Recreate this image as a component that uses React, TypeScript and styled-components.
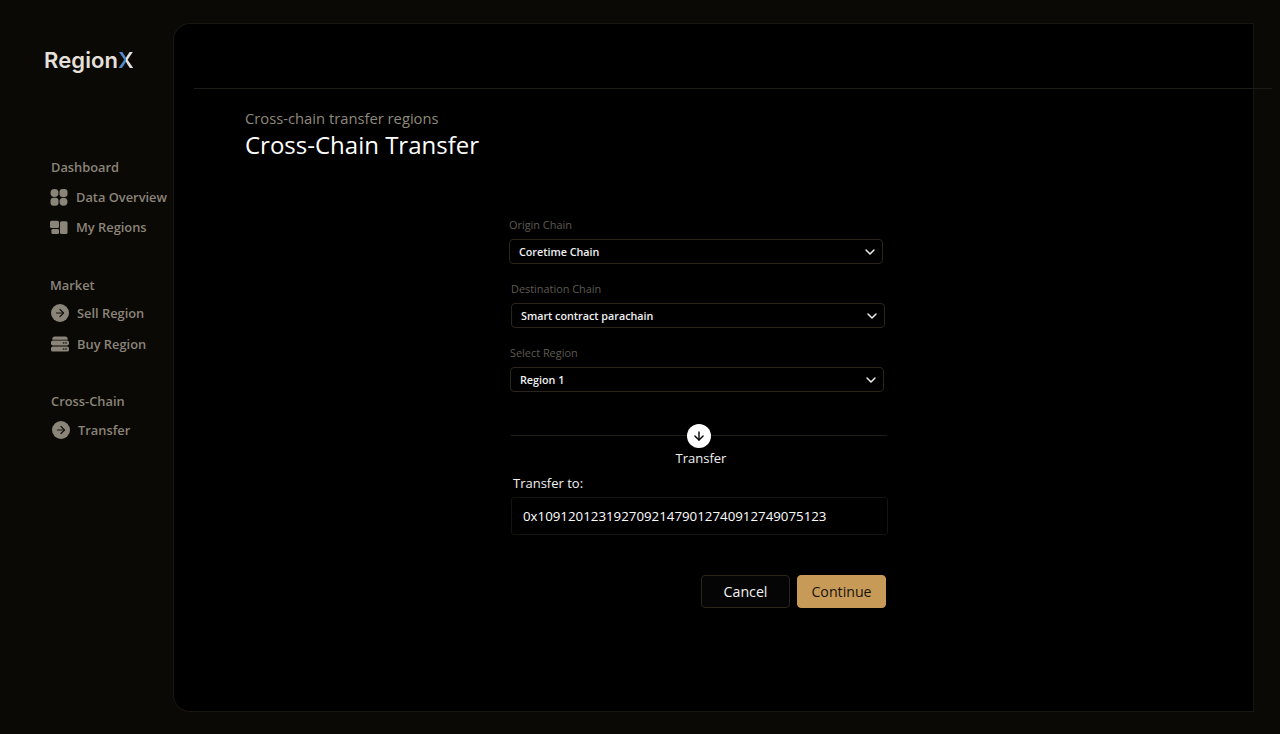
import React from 'react';
import styled, { createGlobalStyle } from 'styled-components';
import { ArrowDown, ArrowRight, ChevronDown } from 'lucide-react';

const GlobalStyle = createGlobalStyle`
  html, body {
    margin: 0;
    padding: 0;
    background: #0a0906;
    overflow: hidden;
  }
  * {
    box-sizing: border-box;
  }
`;

const Frame = styled.div`
  display: flex;
  width: 1280px;
  height: 734px;
  padding: 24px 27px 23px 0;
  background: #0a0906;
  font-family: 'Open Sans', 'Liberation Sans', sans-serif;
`;

const Sidebar = styled.aside`
  flex: 0 0 174px;
  display: flex;
  flex-direction: column;
`;

const Logo = styled.div`
  margin: 22px 0 0 44px;
  height: 28px;
  font-family: Inter, 'Liberation Sans', sans-serif;
  font-size: 22px;
  font-weight: 600;
  line-height: 28px;
  letter-spacing: 0.1px;
  color: #e6e0da;
`;

const LogoMark = styled.span`
  background: linear-gradient(90deg, #4f8bd0 52%, #e6e0da 52%);
  -webkit-background-clip: text;
  background-clip: text;
  color: transparent;
`;

const NavGroup = styled.nav<{ $top: number }>`
  margin-top: ${(p) => p.$top}px;
  display: flex;
  flex-direction: column;
`;

const NavTitle = styled.div<{ $x: number }>`
  margin-left: ${(p) => p.$x}px;
  height: 18px;
  font-size: 12.85px;
  font-weight: 600;
  line-height: 18px;
  color: #8a8479;
`;

const NavItem = styled.div<{ $x: number; $gap: number; $top: number }>`
  display: flex;
  align-items: center;
  gap: ${(p) => p.$gap}px;
  height: 18px;
  margin-top: ${(p) => p.$top}px;
  margin-left: ${(p) => p.$x}px;
  font-size: 12.85px;
  font-weight: 600;
  white-space: nowrap;
  color: #8a8479;
`;

const IconSlot = styled.div`
  flex: 0 0 auto;
  display: flex;
  align-items: center;
  justify-content: center;
  width: 18px;
  height: 18px;
`;

const ArrowBadge = styled.div`
  display: flex;
  align-items: center;
  justify-content: center;
  width: 18px;
  height: 18px;
  border-radius: 50%;
  background: #8a8479;
  color: #14120e;
`;

const Panel = styled.main`
  flex: 1;
  display: flex;
  flex-direction: column;
  background: #000;
  border-radius: 16px 0 0 16px;
  box-shadow: 0 0 0 1px #17160f;
`;

const TopRule = styled.div`
  flex: 0 0 auto;
  height: 1px;
  margin: 64px -19px 0 20px;
  background: #1e1c16;
`;

const PageHead = styled.header`
  margin: 20px 0 0 71px;
`;

const Eyebrow = styled.div`
  font-size: 14.75px;
  line-height: 18px;
  color: #8f897d;
`;

const PageTitle = styled.h1`
  margin: 1px 0 0;
  font-size: 24px;
  font-weight: 400;
  line-height: 34px;
  color: #fff;
`;

const Form = styled.section`
  width: 384px;
  margin: 55px 0 0 335px;
  display: flex;
  flex-direction: column;
`;

const Field = styled.div<{ $x: number }>`
  width: 374px;
  margin-left: ${(p) => p.$x}px;
  margin-bottom: 17px;
`;

const FieldLabel = styled.div`
  height: 15px;
  margin-bottom: 7px;
  font-size: 10.9px;
  line-height: 15px;
  color: #5e5a52;
`;

const Select = styled.div`
  display: flex;
  align-items: center;
  justify-content: space-between;
  height: 25px;
  padding: 0 4px 0 9px;
  border: 1px solid #2b261c;
  border-radius: 4px;
  font-size: 10.75px;
  font-weight: 600;
  color: #f0f0f0;
`;

const Separator = styled.div`
  position: relative;
  display: flex;
  justify-content: center;
  width: 376px;
  height: 24px;
  margin: 15px 0 0 2px;

  &::before {
    content: '';
    position: absolute;
    top: 11px;
    left: 0;
    right: 0;
    height: 1px;
    background: #1e1c16;
  }
`;

const SeparatorBadge = styled.div`
  position: relative;
  display: flex;
  align-items: center;
  justify-content: center;
  width: 24px;
  height: 24px;
  border-radius: 50%;
  background: #fff;
  color: #000;
`;

const SeparatorText = styled.div`
  margin-top: 1px;
  text-align: center;
  font-size: 13px;
  font-weight: 500;
  line-height: 18px;
  color: #f2f2f2;
`;

const AddressLabel = styled.div`
  margin: 7px 0 0 4px;
  font-size: 13px;
  font-weight: 500;
  line-height: 18px;
  color: #f2f2f2;
`;

const AddressBox = styled.div`
  display: flex;
  align-items: center;
  width: 377px;
  height: 38px;
  margin: 5px 0 0 2px;
  padding-left: 11px;
  border: 1px solid #15140f;
  border-radius: 3px;
  font-size: 13.3px;
  font-weight: 500;
  color: #fff;
`;

const Actions = styled.div`
  display: flex;
  justify-content: flex-end;
  gap: 7px;
  width: 377px;
  margin-top: 40px;
`;

const ActionButton = styled.button<{ $primary?: boolean }>`
  width: 89px;
  height: 33px;
  padding: 0;
  border: 1px solid ${(p) => (p.$primary ? '#c89a57' : '#2b261c')};
  border-radius: 4px;
  background: ${(p) => (p.$primary ? '#c89a57' : '#050505')};
  font-family: inherit;
  font-size: 14.2px;
  color: ${(p) => (p.$primary ? '#17130b' : '#f2f2f2')};
`;

const GridIcon = () => (
  <svg width="18" height="18" viewBox="0 0 18 18" fill="#8a8479">
    <circle cx="4.5" cy="5" r="4" />
    <rect x="9.5" y="1" width="8" height="8" rx="3" />
    <rect x="0.5" y="9.8" width="8" height="8" rx="3" />
    <circle cx="13.5" cy="13.8" r="4" />
  </svg>
);

const RegionsIcon = () => (
  <svg width="19" height="18" viewBox="0 0 19 18" fill="#8a8479">
    <rect x="0" y="2.5" width="9.5" height="7.5" rx="1.6" />
    <rect x="1.5" y="11" width="8" height="5.5" rx="1.4" />
    <rect x="10.5" y="3" width="8" height="13.5" rx="1.6" />
  </svg>
);

const StackIcon = () => (
  <svg width="19" height="18" viewBox="0 0 19 18" fill="#8a8479">
    <path d="M4 1h11a3 3 0 0 1 2.6 3.4H1.4A3 3 0 0 1 4 1z" />
    <rect x="0" y="5.2" width="19" height="5.4" rx="2" />
    <rect x="0" y="11.6" width="19" height="5.4" rx="2" />
    <rect x="12.5" y="7.2" width="1.6" height="1.4" fill="#14120e" />
    <rect x="15" y="7.2" width="1.6" height="1.4" fill="#14120e" />
    <rect x="12.5" y="13.6" width="1.6" height="1.4" fill="#14120e" />
    <rect x="15" y="13.6" width="1.6" height="1.4" fill="#14120e" />
  </svg>
);

const Arrow = () => (
  <ArrowBadge>
    <ArrowRight size={12} strokeWidth={2.4} />
  </ArrowBadge>
);

const fields = [
  { label: 'Origin Chain', value: 'Coretime Chain', x: 0 },
  { label: 'Destination Chain', value: 'Smart contract parachain', x: 2 },
  { label: 'Select Region', value: 'Region 1', x: 1 },
];

export default function App() {
  return (
    <>
      <GlobalStyle />
      <Frame>
        <Sidebar>
          <Logo>
            Region<LogoMark>X</LogoMark>
          </Logo>
          <NavGroup $top={84}>
            <NavTitle $x={51}>Dashboard</NavTitle>
            <NavItem $x={50} $gap={8} $top={12}>
              <IconSlot>
                <GridIcon />
              </IconSlot>
              Data Overview
            </NavItem>
            <NavItem $x={50} $gap={8} $top={12}>
              <IconSlot>
                <RegionsIcon />
              </IconSlot>
              My Regions
            </NavItem>
          </NavGroup>
          <NavGroup $top={40}>
            <NavTitle $x={50}>Market</NavTitle>
            <NavItem $x={51} $gap={8} $top={10}>
              <Arrow />
              Sell Region
            </NavItem>
            <NavItem $x={51} $gap={8} $top={13}>
              <IconSlot>
                <StackIcon />
              </IconSlot>
              Buy Region
            </NavItem>
          </NavGroup>
          <NavGroup $top={39}>
            <NavTitle $x={51}>Cross-Chain</NavTitle>
            <NavItem $x={52} $gap={8} $top={11}>
              <Arrow />
              Transfer
            </NavItem>
          </NavGroup>
        </Sidebar>
        <Panel>
          <TopRule />
          <PageHead>
            <Eyebrow>Cross-chain transfer regions</Eyebrow>
            <PageTitle>Cross-Chain Transfer</PageTitle>
          </PageHead>
          <Form>
            {fields.map((field) => (
              <Field $x={field.x} key={field.label}>
                <FieldLabel>{field.label}</FieldLabel>
                <Select>
                  {field.value}
                  <ChevronDown size={16} strokeWidth={2.2} />
                </Select>
              </Field>
            ))}
            <Separator>
              <SeparatorBadge>
                <ArrowDown size={14} strokeWidth={2.4} />
              </SeparatorBadge>
            </Separator>
            <SeparatorText>Transfer</SeparatorText>
            <AddressLabel>Transfer to:</AddressLabel>
            <AddressBox>0x10912012319270921479012740912749075123</AddressBox>
            <Actions>
              <ActionButton>Cancel</ActionButton>
              <ActionButton $primary>Continue</ActionButton>
            </Actions>
          </Form>
        </Panel>
      </Frame>
    </>
  );
}
